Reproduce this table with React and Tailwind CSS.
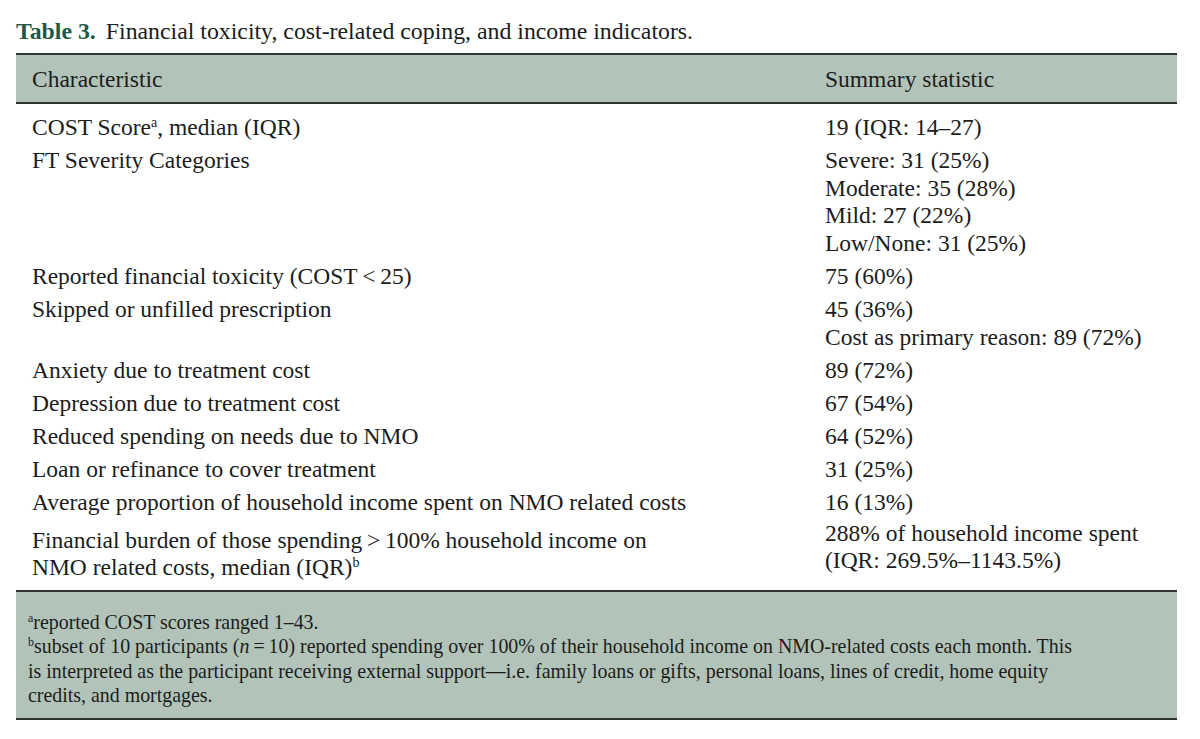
const rows = [
  { left: [<>COST Score<sup className="text-[0.6em] top-[-0.55em]">a</sup>, median (IQR)</>], right: ["19 (IQR: 14–27)"] },
  {
    left: ["FT Severity Categories"],
    right: ["Severe: 31 (25%)", "Moderate: 35 (28%)", "Mild: 27 (22%)", "Low/None: 31 (25%)"],
  },
  { left: ["Reported financial toxicity (COST\u2009<\u200925)"], right: ["75 (60%)"] },
  {
    left: ["Skipped or unfilled prescription"],
    right: ["45 (36%)", "Cost as primary reason: 89 (72%)"],
  },
  { left: ["Anxiety due to treatment cost"], right: ["89 (72%)"] },
  { left: ["Depression due to treatment cost"], right: ["67 (54%)"] },
  { left: ["Reduced spending on needs due to NMO"], right: ["64 (52%)"] },
  { left: ["Loan or refinance to cover treatment"], right: ["31 (25%)"] },
  {
    left: ["Average proportion of household income spent on NMO related costs"],
    right: ["16 (13%)"],
  },
];

const Row = ({ left, right }) => (
  <div className="grid grid-cols-[793px_1fr] py-[2.65px]">
    <div>
      {left.map((l, i) => (
        <div key={i}>{l}</div>
      ))}
    </div>
    <div>
      {right.map((r, i) => (
        <div key={i}>{r}</div>
      ))}
    </div>
  </div>
);

export default function App() {
  return (
    <div
      className="w-[1200px] h-[739px] bg-white text-[#1c1c1c] pt-[16px] overflow-hidden"
      style={{ fontFamily: '"Liberation Serif", "Times New Roman", serif' }}
    >
      {/* caption */}
      <div className="pl-[16px] text-[23.8px] leading-[30px]">
        <span className="font-bold text-[#1d5a45]">Table 3.</span>
        <span className="ml-[10px]">Financial toxicity, cost-related coping, and income indicators.</span>
      </div>

      <div className="ml-[16px] w-[1161px] mt-[7px] text-[23.5px] leading-[27.7px]">
        {/* header */}
        <div className="grid grid-cols-[793px_1fr] border-y-2 border-[#2f3431] bg-[#b2c4b9] pl-[16px] pt-[11px] pb-[8px]">
          <div>Characteristic</div>
          <div>Summary statistic</div>
        </div>

        {/* body */}
        <div className="pl-[16px] pt-[7.5px] pb-[5px]">
          {rows.map((r, i) => (
            <Row key={i} left={r.left} right={r.right} />
          ))}
          <div className="grid grid-cols-[793px_1fr] py-[2.65px]">
            <div className="pt-[5px]">
              <div>Financial burden of those spending{"\u2009>\u2009"}100% household income on</div>
              <div>
                NMO related costs, median (IQR)<sup className="text-[0.6em] top-[-0.55em]">b</sup>
              </div>
            </div>
            <div className="-mt-[2px]">
              <div>288% of household income spent</div>
              <div>(IQR: 269.5%–1143.5%)</div>
            </div>
          </div>
        </div>

        {/* footnotes */}
        <div className="border-y-2 border-[#2f3431] bg-[#b2c4b9] pl-[12px] pt-[18.5px] pb-[10.5px] text-[19.9px] leading-[24.3px]">
          <div>
            <sup className="text-[0.6em] top-[-0.6em]">a</sup>reported COST scores ranged 1–43.
          </div>
          <div>
            <sup className="text-[0.6em] top-[-0.6em]">b</sup>subset of 10 participants (<i>n</i>
            {"\u2009=\u2009"}10) reported spending over 100% of their household income on NMO-related costs each
            month. This
            <br />
            is interpreted as the participant receiving external support—i.e. family loans or gifts, personal loans,
            lines of credit, home equity
            <br />
            credits, and mortgages.
          </div>
        </div>
      </div>
    </div>
  );
}
